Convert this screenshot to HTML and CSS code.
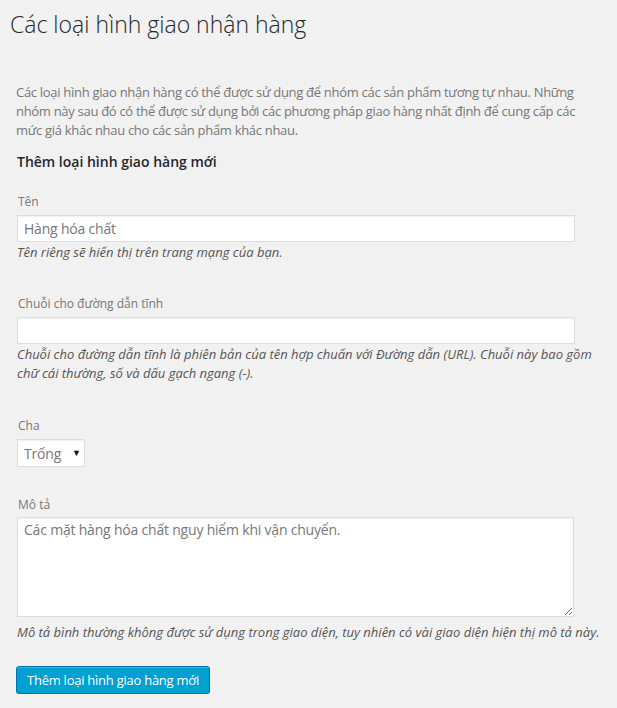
FILE: index.html
```html
<!DOCTYPE html>
<html lang="vi">
<head>
<meta charset="utf-8">
<title>Các loại hình giao nhận hàng</title>
<link rel="stylesheet" href="styles.css">
</head>
<body>
<div class="wrap">
  <h1 class="page-title">Các loại hình giao nhận hàng</h1>
  <p class="intro">Các loại hình giao nhận hàng có thể được sử dụng để nhóm các sản phẩm tương tự nhau. Những nhóm này sau đó có thể được sử dụng bởi các phương pháp giao hàng nhất định để cung cấp các mức giá khác nhau cho các sản phẩm khác nhau.</p>
  <h2 class="section-title">Thêm loại hình giao hàng mới</h2>
  <form class="form">
    <div class="field field-name">
      <label class="label" for="tag-name">Tên</label>
      <input class="text-input" id="tag-name" type="text" value="Hàng hóa chất">
      <p class="desc">Tên riêng sẽ hiển thị trên trang mạng của bạn.</p>
    </div>
    <div class="field field-slug">
      <label class="label" for="tag-slug">Chuỗi cho đường dẫn tĩnh</label>
      <input class="text-input" id="tag-slug" type="text" value="">
      <p class="desc">Chuỗi cho đường dẫn tĩnh là phiên bản của tên hợp chuẩn với Đường dẫn (URL). Chuỗi này bao gồm chữ cái thường, số và dấu gạch ngang (-).</p>
    </div>
    <div class="field field-parent">
      <label class="label" for="parent">Cha</label>
      <span class="select-wrap"><select class="select" id="parent"><option>Trống</option></select></span>
    </div>
    <div class="field field-desc">
      <label class="label" for="tag-desc">Mô tả</label>
      <textarea class="textarea" id="tag-desc">Các mặt hàng hóa chất nguy hiểm khi vận chuyển.</textarea>
      <p class="desc">Mô tả bình thường không được sử dụng trong giao diện, tuy nhiên có vài giao diện hiện thị mô tả này.</p>
    </div>
    <div class="submit">
      <button class="button-primary" type="button">Thêm loại hình giao hàng mới</button>
    </div>
  </form>
</div>
</body>
</html>
```

FILE: styles.css
```css
html, body {
  margin: 0;
  padding: 0;
  background: #f1f1f1;
}

body {
  font-family: "Open Sans", "Noto Sans", sans-serif;
  color: #444;
  font-size: 13px;
}

.wrap {
  padding: 10px 17px 0 10px;
}

.page-title {
  margin: 0;
  font-size: 23px;
  font-weight: 300;
  line-height: 29px;
  color: #23282d;
}

.intro {
  margin: 44px 0 0 6px;
  font-size: 13px;
  line-height: 19px;
  letter-spacing: -0.3px;
  color: #777;
}

.section-title {
  margin: 12px 0 0 7px;
  font-size: 14px;
  font-weight: 600;
  line-height: 20px;
  color: #23282d;
}

.form {
  margin: 22px 0 0 7px;
}

.field {
  display: flex;
  flex-direction: column;
  align-items: flex-start;
}

.field-slug {
  margin-top: 34px;
}

.field-parent {
  margin-top: 35px;
}

.field-desc {
  margin-top: 30px;
}

.label {
  display: block;
  margin-left: 1px;
  font-size: 12px;
  line-height: 16px;
  color: #777;
}

.text-input {
  box-sizing: border-box;
  width: 558px;
  height: 27px;
  margin: 5px 0 0 0;
  padding: 2px 6px;
  border: 1px solid #ddd;
  border-radius: 0;
  background: #fff;
  box-shadow: inset 0 1px 2px rgba(0, 0, 0, 0.07);
  font-family: "Open Sans", "Noto Sans", sans-serif;
  font-size: 14px;
  letter-spacing: -0.2px;
  color: #777;
  outline: none;
}

.desc {
  margin: 1px 0 0 0;
  font-size: 13px;
  font-style: italic;
  line-height: 19px;
  color: #555;
}

.select-wrap {
  position: relative;
  display: block;
  margin-top: 5px;
}

.select-wrap::after {
  content: "▼";
  position: absolute;
  left: 55px;
  top: 9px;
  font-size: 9px;
  line-height: 10px;
  color: #111;
  pointer-events: none;
}

.select {
  display: block;
  box-sizing: border-box;
  width: 68px;
  height: 28px;
  margin: 0;
  padding: 0 0 0 6px;
  border: 1px solid #ddd;
  border-radius: 0;
  background: #fff;
  box-shadow: inset 0 1px 2px rgba(0, 0, 0, 0.07);
  -webkit-appearance: none;
  appearance: none;
  font-family: "Open Sans", "Noto Sans", sans-serif;
  font-size: 14px;
  letter-spacing: -0.2px;
  color: #777;
  outline: none;
}

.textarea {
  display: block;
  box-sizing: border-box;
  width: 557px;
  height: 100px;
  margin: 4px 0 0 0;
  padding: 2px 6px;
  border: 1px solid #ddd;
  border-radius: 0;
  background: #fff;
  box-shadow: inset 0 1px 2px rgba(0, 0, 0, 0.07);
  font-family: "Open Sans", "Noto Sans", sans-serif;
  font-size: 14px;
  line-height: 20px;
  letter-spacing: -0.2px;
  color: #777;
  outline: none;
}

.field-desc .desc {
  margin-top: 6px;
}

.submit {
  margin-top: 24px;
  margin-left: -1px;
}

.button-primary {
  box-sizing: border-box;
  height: 28px;
  padding: 0 10px 1px;
  border: 1px solid #0073aa;
  border-radius: 3px;
  background: #00a0d2;
  box-shadow: inset 0 1px 0 rgba(120, 200, 230, 0.5), 0 1px 0 rgba(0, 0, 0, 0.15);
  font-family: "Open Sans", "Noto Sans", sans-serif;
  font-size: 13px;
  line-height: 26px;
  letter-spacing: -0.25px;
  color: #fff;
  cursor: pointer;
}
```
